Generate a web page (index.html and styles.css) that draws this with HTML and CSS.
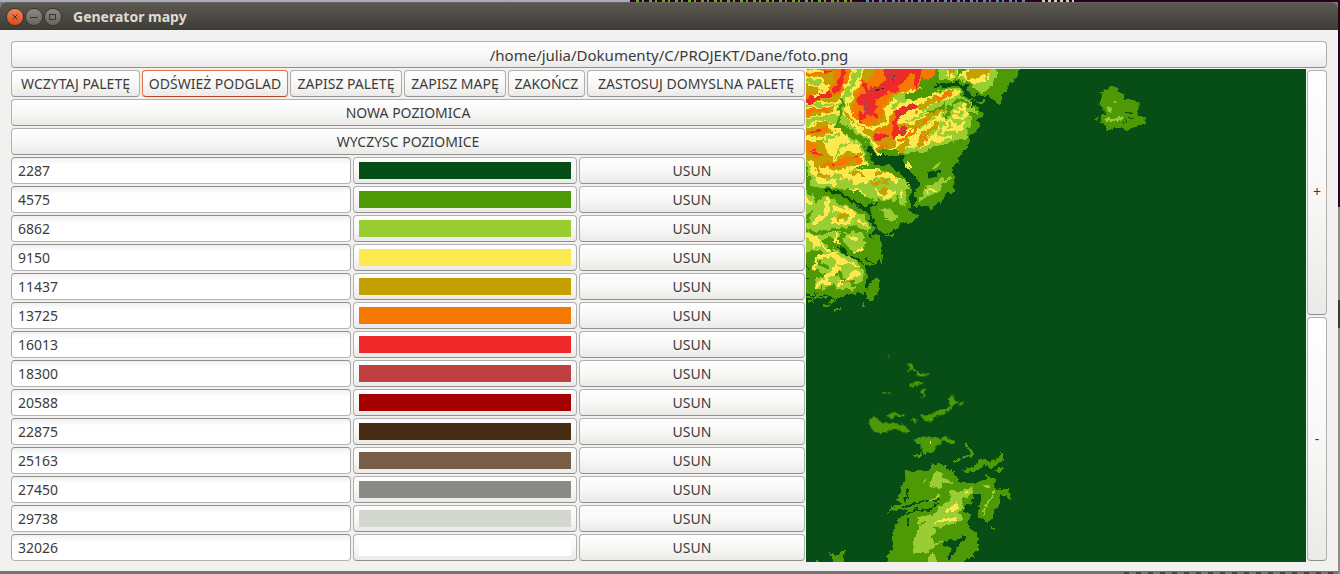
FILE: index.html
```html
<!DOCTYPE html>
<html lang="pl">
<head>
<meta charset="utf-8">
<title>Generator mapy</title>
<link rel="stylesheet" href="styles.css">
</head>
<body>
<div class="window">
  <header class="titlebar">
    <button class="wm close" aria-label="Zamknij"><svg viewBox="0 0 16 16"><path d="M5.500 5.500l5 5M10.500 5.500l-5 5"/></svg></button>
    <button class="wm" aria-label="Minimalizuj"><svg viewBox="0 0 16 16"><path d="M4 8.500h8"/></svg></button>
    <button class="wm" aria-label="Maksymalizuj"><svg viewBox="0 0 16 16"><path d="M4.500 5.500h6v5h-6z"/></svg></button>
    <h1>Generator mapy</h1>
  </header>
  <main class="content">
    <button class="btn path">/home/julia/Dokumenty/C/PROJEKT/Dane/foto.png</button>
    <div class="columns">
      <section class="editor">
        <div class="toolbar">
          <button class="btn">WCZYTAJ PALETĘ</button>
          <button class="btn focused">ODŚWIEŻ PODGLAD</button>
          <button class="btn">ZAPISZ PALETĘ</button>
          <button class="btn">ZAPISZ MAPĘ</button>
          <button class="btn">ZAKOŃCZ</button>
          <button class="btn">ZASTOSUJ DOMYSLNA PALETĘ</button>
        </div>
        <button class="btn">NOWA POZIOMICA</button>
        <button class="btn">WYCZYSC POZIOMICE</button>
        <div class="level"><input class="entry" aria-label="Poziom 1" value="2287"><button class="btn swatch" aria-label="Kolor 1"><span class="c1"></span></button><button class="btn">USUN</button></div>
        <div class="level"><input class="entry" aria-label="Poziom 2" value="4575"><button class="btn swatch" aria-label="Kolor 2"><span class="c2"></span></button><button class="btn">USUN</button></div>
        <div class="level"><input class="entry" aria-label="Poziom 3" value="6862"><button class="btn swatch" aria-label="Kolor 3"><span class="c3"></span></button><button class="btn">USUN</button></div>
        <div class="level"><input class="entry" aria-label="Poziom 4" value="9150"><button class="btn swatch" aria-label="Kolor 4"><span class="c4"></span></button><button class="btn">USUN</button></div>
        <div class="level"><input class="entry" aria-label="Poziom 5" value="11437"><button class="btn swatch" aria-label="Kolor 5"><span class="c5"></span></button><button class="btn">USUN</button></div>
        <div class="level"><input class="entry" aria-label="Poziom 6" value="13725"><button class="btn swatch" aria-label="Kolor 6"><span class="c6"></span></button><button class="btn">USUN</button></div>
        <div class="level"><input class="entry" aria-label="Poziom 7" value="16013"><button class="btn swatch" aria-label="Kolor 7"><span class="c7"></span></button><button class="btn">USUN</button></div>
        <div class="level"><input class="entry" aria-label="Poziom 8" value="18300"><button class="btn swatch" aria-label="Kolor 8"><span class="c8"></span></button><button class="btn">USUN</button></div>
        <div class="level"><input class="entry" aria-label="Poziom 9" value="20588"><button class="btn swatch" aria-label="Kolor 9"><span class="c9"></span></button><button class="btn">USUN</button></div>
        <div class="level"><input class="entry" aria-label="Poziom 10" value="22875"><button class="btn swatch" aria-label="Kolor 10"><span class="c10"></span></button><button class="btn">USUN</button></div>
        <div class="level"><input class="entry" aria-label="Poziom 11" value="25163"><button class="btn swatch" aria-label="Kolor 11"><span class="c11"></span></button><button class="btn">USUN</button></div>
        <div class="level"><input class="entry" aria-label="Poziom 12" value="27450"><button class="btn swatch" aria-label="Kolor 12"><span class="c12"></span></button><button class="btn">USUN</button></div>
        <div class="level"><input class="entry" aria-label="Poziom 13" value="29738"><button class="btn swatch" aria-label="Kolor 13"><span class="c13"></span></button><button class="btn">USUN</button></div>
        <div class="level"><input class="entry" aria-label="Poziom 14" value="32026"><button class="btn swatch" aria-label="Kolor 14"><span class="c14"></span></button><button class="btn">USUN</button></div>
      </section>
      <svg class="map" viewBox="0 0 500 493" preserveAspectRatio="xMinYMin slice" role="img" aria-label="Podgląd mapy">
        <defs>
          <filter id="rough" color-interpolation-filters="sRGB" x="-5%" y="-5%" width="110%" height="110%">
            <feTurbulence type="fractalNoise" baseFrequency="0.16" numOctaves="2" seed="4"/>
            <feDisplacementMap in="SourceGraphic" scale="9" xChannelSelector="R" yChannelSelector="G"/>
          </filter>
          <filter id="fine" color-interpolation-filters="sRGB" x="-5%" y="-5%" width="110%" height="110%">
            <feTurbulence type="fractalNoise" baseFrequency="0.25" numOctaves="2" seed="9"/>
            <feDisplacementMap in="SourceGraphic" scale="5" xChannelSelector="R" yChannelSelector="G"/>
          </filter>
        </defs>
        <!-- north-west mountains -->
        <g filter="url(#rough)">
          <g transform="translate(94 -3) scale(.3333)">
            <path class="f2" d="M-300-20H376L340 45 315 75 302 114 285 100 240 85 205 95 212 115 240 125 245 150 228 165 240 175 225 200 205 215 210 225 195 255 180 265 175 295 150 305 165 330 158 380H-300z"/>
          </g>
          <g transform="translate(0 101) scale(.3333)">
            <path class="f2" d="M-30-20L445-20 445 10 437 50 405 98 385 100 378 122 360 110 330 108 315 122 342 138 320 153 300 155 270 175 240 190 210 178 200 165 205 185 230 210 228 250 215 280 195 285 180 285 185 320 180 340 175 370 120 375 100 382 60 375-30 370z"/>
            <path class="f2" d="M175 370L180 387 205 387 222 360 220 325 195 335z"/>
            <path class="f3" d="M-20 45L100 36 140 55 190 88 268 92 282 60 270 20 265-20H-20z"/>
            <path class="f4" d="M8-20L20 35 90 42 150 68 180 78 200 55 225 86 262 86 266 25 220-20z"/>
            <path class="f5" d="M18 5L50 33 80 15 130 22 200 40 228 78 248 70 238 25 160 12 130-20H30z"/>
            <path class="f6" d="M35 10L50 22 60 5 120 12 110-10H50z"/>
            <path class="s3" stroke-width="9" d="M110 46L150 52 195 74M120 30L190 62"/>
            <path class="f3" d="M-20 55L10 55 20 70 28 100 45 82 75 85 110 105 160 130 192 165 185 185 150 165 120 175 170 190 180 215 160 250 130 245 105 205 60 200 90 240 150 270 170 300 175 330 140 360 90 362 80 335 50 360 20 350 40 310 20 290 45 250 20 240-20 250z"/>
            <path class="s2" stroke-width="11" d="M20 120L0 150M-10 175L30 190 90 180 160 180M55 215L110 235 170 260M10 260L60 290M30 320L90 310 150 345M70 205L75 235M105 195L115 230M0 310L30 300"/>
            <path class="s4" stroke-width="15" d="M65 95L60 130 25 160M85 115L140 130 130 155 80 155M0 90L12 100M8 200L35 210 22 230M45 260L75 250 105 272M62 320L95 295M98 342L125 328 152 312M32 348L62 334"/>
            <path class="s4" stroke-width="7" d="M160 150L182 170M90 190L95 215M125 200L150 205M150 245L165 240M25 215L70 240M105 272L150 285M35 262L20 300M90 265L100 310"/>
            <path class="s5" stroke-width="9" d="M98 145L120 130M130 330L110 340"/>
            <path class="s3" stroke-width="22" d="M290 35L290 100"/>
            <path class="s4" stroke-width="5" d="M290 55L287 85"/>
            <path class="f3" d="M340 90L355 55 412 28 398 65 360 82z"/>
            <path class="s4" stroke-width="8" d="M365 64L384 60"/>
            <path class="f3" d="M222 118L250 115 272 135 268 158 245 150z"/>
          </g>
          <g transform="translate(0 -3) scale(.3333)">
            <path class="f4" d="M-30-20H330V230L300 250 190 250 200 300 250 320 290 345-30 350z"/>
            <path class="f5" d="M-30-20H330V215L240 250 190 220 150 175 115 165 60 180-30 200z"/>
            <path class="f5" d="M-30 185L60 180 90 205 50 230 75 270 120 255 180 260 195 290 110 315 40 335 25 290-30 270z"/>
            <path class="f6" d="M165 40L190 45 210-20 340-20 330 68 280 75 250 95 228 130 230 155 200 180 160 185 135 150 148 90z"/>
            <path class="f6" d="M340 105L290 118 260 140 245 190 250 228 280 228 335 190z"/>
            <path class="f6" d="M85-20L130-20 128 50 100 85 60 95-20 115-20 85 60 70 80 45z"/>
            <path class="s6" stroke-width="14" d="M-10 28L70 14M10 202L62 190M-10 135L60 130M-10 245L40 268M58 300L105 292 135 276 185 285M50 335L75 322M205 190L240 195 232 215M215 250L235 235M30 245L-5 232"/>
            <path class="f7" d="M168 45L186 50 183 70 215 60 240 45 222-20H312L275 48 278 70 235 85 207 100 217 130 182 150 162 178 162 145 180 125 153 112 158 85 178 85z"/>
            <path class="f7" d="M335 112L300 128 265 145 262 175 255 205 265 222 292 215 310 190 335 145z"/>
            <path class="s7" stroke-width="15" d="M112-10L108 40 92 70M70 86L0 106M210 212L236 208M165 145L215 150"/>
            <path class="s7" stroke-width="6" d="M12 202L45 192M20 258L42 266M80 296L90 294M140 276L155 272M45 20L75 14"/>
            <path class="s8" stroke-width="12" d="M242 22L262 45 270 25M190 80L215 68 235 70M178 100L182 135M273 150L285 148M278 208L296 188"/>
            <path class="s9" stroke-width="4" d="M260 36L264 46M213 70L225 68M288 194L290 200"/>
            <path class="s4" stroke-width="34" d="M165 0L140 50 118 95 105 115 102 170"/>
            <path class="s4" stroke-width="52" d="M102 170L140 205 175 230 200 285 290 315"/>
            <path class="s4" stroke-width="28" d="M-10 46L35 45 55 68M-10 172L50 155 95 155M340 82L295 92 262 118 245 135"/>
            <path class="s4" stroke-width="18" d="M-10 122L40 118 95 112"/>
            <path class="s4" stroke-width="9" d="M245 130L243 180M-10 14L50 18M-10 218L60 215 90 200M15 90L60 78M140 75L125 130 150 170 200 190 240 172"/>
            <path class="s4" stroke-width="20" d="M92 205L58 222M145 225L110 235 88 272M185 300L150 305 90 325 50 315"/>
            <path class="s3" stroke-width="38" d="M103 165L140 205 175 230 200 285 290 315"/>
            <path class="s3" stroke-width="17" d="M163 0L140 50 118 95 105 115 102 170M-10 48L35 46M340 84L295 94 265 118M-10 172L50 156 95 160"/>
            <path class="s3" stroke-width="8" d="M-10 122L40 118 95 114M92 205L58 225 48 218M130 230L105 240 88 272M175 303L145 312 90 330"/>
            <path class="s2" stroke-width="24" d="M96 180L145 208 178 232 200 290 310 330"/>
            <path class="s2" stroke-width="9" d="M107 95L103 165M340 88L320 88M160 306L240 306"/>
            <path class="s3" stroke-width="34" d="M-10 290L5 345 100 352 300 352"/>
            <path class="s2" stroke-width="22" d="M-10 290L2 350 15 375"/>
            <path class="s4" stroke-width="14" d="M30 340L85 350M110 320L150 345 200 340M190 320L260 330 270 350"/>
            <path class="s5" stroke-width="8" d="M30 325L60 335M130 320L170 325M210 325L240 318M200 350L250 345"/>
          </g>
          <g transform="translate(94 -3) scale(.3333)">
            <path class="f3" d="M112-20H300L285 45 250 82 225 70 200 45 120 42z"/>
            <path class="f4" d="M135-20H285L270 35 250 55 230 50 225 62 195 35 140 32z"/>
            <path class="f5" d="M138-20H172L168 22 145 30zM195 22L240-10 280-10 270 24 205 36z"/>
            <path class="s3" stroke-width="9" d="M175 5L160 35M240 75L260 45 262 30M185 15L205 5"/>
            <path class="s2" stroke-width="6" d="M185 8L165 38"/>
            <path class="f6" d="M-10-20H110L100 35 70 40 50 75 30 70-10 75z"/>
            <path class="f7" d="M-10-20H75L62 45 45 70 40 15 15 40-10 65z"/>
            <path class="f3" d="M-10 80L60 80 120 65 175 65 200 95 215 118 235 130 228 140 200 142 215 165 200 200 205 212 150 230 60 258-10 262z"/>
            <path class="f4" d="M-10 112L50 100 100 82 150 70 175 80 165 96 110 110 60 130 60 150 90 135 130 118 140 125 125 150 150 170 135 195 110 215 80 240 40 245-10 255z"/>
            <path class="s4" stroke-width="12" d="M165 135L190 125 202 150M150 165L175 190 190 175M140 190L185 188M160 150L190 158M105 225L150 212"/>
            <path class="s5" stroke-width="16" d="M55 130L95 105 155 82M-5 178L40 185 90 150 130 130M60 232L75 200 115 175M0 250L25 228"/>
            <path class="s6" stroke-width="10" d="M0 145L45 115M0 222L15 215 55 190 80 160M110 95L150 84M70 215L80 225"/>
            <path class="s7" stroke-width="18" d="M-10 145L20 130 42 116M-10 200L15 190"/>
            <path class="s8" stroke-width="9" d="M-5 155L2 140M3 198L12 190M28 124L36 118"/>
            <path class="s4" stroke-width="10" d="M-5 168L40 162 80 135M50 200L85 175"/>
            <path class="s3" stroke-width="7" d="M20 165L50 158 90 130 140 112M60 185L100 160M80 215L110 190M115 205L130 170"/>
            <path class="s2" stroke-width="10" d="M140 150L155 115 180 100 205 120M90 135L135 120"/>
            <path class="s2" stroke-width="24" d="M30 92L80 82 120 58 175 55 205 88 245 98"/>
            <path class="s1" stroke-width="13" d="M110 61L165 52 190 62 208 88 240 98 285 106"/>
            <path class="s3" stroke-width="9" d="M97 306L115 298M120 350L150 335"/>
            <path class="s1" stroke-width="9" d="M85 326L120 319M218 208L225 206"/>
          </g>
          <path class="f1" d="M59 76L65 80 70 87 80 86 98 88 97 97 112 107 112 120 106 120 100 112 95 104 83 96 71 95 66 92z"/>
          <g transform="translate(0 101) scale(.3333)">
            <path class="s1" stroke-width="16" d="M285-5L308 15 322 45 320 110 310 118"/>
            <path class="s1" stroke-width="9" d="M60 62L100 68 150 100 180 115 200 145 206 185M182 112L215 98"/>
            <path class="s1" stroke-width="5" d="M100 230L130 258 160 270 175 285M180 265L195 278M2 285L6 305M0 330L10 328M200 190L195 205M190 110L195 98"/>
            <path class="s1" stroke-width="8" d="M370 12L405 8"/>
          </g>
        </g>
        <!-- coastal islets -->
        <g filter="url(#fine)">
          <g transform="translate(0 101) scale(.3333)">
            <path class="s2" stroke-width="6" d="M5 380L30 384 65 382M68 395L90 392M55 408L76 406M85 422L98 416M8 393L20 394M172 400L173 408M240 195L262 195M228 258L225 278"/>
          </g>
          <g transform="translate(274 7) scale(.3333)">
            <path class="f2" d="M62 50L78 38 95 30 118 38 116 50 130 55 130 72 150 68 175 78 178 95 172 118 198 125 192 145 160 155 140 165 130 158 100 155 85 165 76 150 60 140 64 118 80 112 55 85 65 65zM44 125L57 123 50 135z"/>
            <path class="s1" stroke-width="4" d="M132 110L155 112M142 125L158 126M132 140L140 132"/>
            <path class="s3" stroke-width="9" d="M82 132L126 128M86 94L87 104"/>
            <path class="s3" stroke-width="4" d="M103 79L106 83"/>
          </g>
          <g transform="translate(54 271) scale(.3333)">
            <path class="f2" d="M141 70L152 72 158 84 172 92 176 98 208 104 205 109 172 108 172 99 155 90 142 94 150 84zM142 135L188 123 190 130 152 142zM188 146L200 147 190 158 195 172 187 172 181 156zM82 230L95 217 133 224 134 230 105 230 90 236zM28 240L38 228 52 232 54 244 72 248 100 250 125 252 138 262 148 275 142 280 118 272 105 268 82 272 72 280 52 278 30 264zM180 228L215 222 235 210 262 206 268 198 266 175 277 162 284 180 298 188 285 192 270 212 245 224 235 226 210 244 195 248 193 235zM160 300L180 292 210 290 245 295 258 285 266 297 283 300 275 305 250 304 232 318 215 340 185 340 182 312z"/>
            <path class="s2" stroke-width="4" d="M84 50L86 48M70 158L78 158M85 158L92 162M150 240L172 240M162 236L164 248M298 194L310 190M318 320L324 318M326 328L332 328"/>
          </g>
        </g>
        <!-- southern island -->
        <g filter="url(#fine)">
          <g transform="translate(-6 371) scale(.3333)">
            <path class="f2" d="M345 0H425L405 15 390 38 372 42 365 22z"/>
            <path class="s2" stroke-width="8" d="M345 48L362 45M430-2L460 5M500 15L508 28 520 45 490 50M465 64L475 62M490 90L510 92 530 85M505 48L522 42M592 92L608 86M575 262L577 266"/>
            <path class="s2" stroke-width="14" d="M500 92L525 86 550 62 570 76 603 56 606 46"/>
            <path class="f2" d="M316 94L350 95 365 92 385 90 400 72 436 72 438 85 462 95 480 125 530 128 555 120 560 108 590 115 580 130 585 145 625 148 635 180 615 165 600 165 595 200 585 212 572 240 560 250 550 235 535 232 535 210 545 165 520 165 515 190 495 195 490 215 515 225 500 245 512 270 530 275 537 325 520 340 525 355 500 355 480 385H265L262 345 278 330 275 290 295 232 318 226 320 210 300 208 265 215 275 202 310 190 290 182 305 150 300 140 315 120z"/>
            <path class="f2" d="M88 337L108 350 120 337 134 333 130 390H100L98 352zM45 370L52 355 60 372z"/>
            <path class="s1" stroke-width="6" d="M322 148L320 175 312 185M310 205L345 190 385 182 415 178M325 222L350 208 385 212 410 190M325 235L325 255M540 165L535 200"/>
            <path class="f1" d="M428 315L445 298 468 300 500 285 498 300 480 310 465 335 445 362 442 350 458 325 440 318z"/>
            <path class="f3" d="M400 100L412 94 425 98 428 112 455 125 462 132 430 128 425 145 395 142 388 128z"/>
            <path class="f3" d="M445 155L478 152 515 142 520 155 500 172 485 175 490 200 478 215 490 240 465 250 430 258 410 270 395 290 405 320 380 340 340 338 340 305 355 265 352 230 400 225 420 200 455 180z"/>
            <path class="f3" d="M385 350L405 335 410 365 400 380 385 380z"/>
            <path class="s3" stroke-width="5" d="M388 184L418 164M548 225L560 190 575 175 582 152M368 128L375 122M548 138L568 138M400 318L425 305"/>
            <path class="s2" stroke-width="5" d="M355 258L375 245M400 262L420 265"/>
            <path class="s4" stroke-width="9" d="M440 212L472 203M440 212L460 200 470 195M425 244L445 238 465 238"/>
            <path class="s4" stroke-width="5" d="M400 248L430 245M494 158L506 156"/>
            <path class="s4" stroke-width="4" d="M391 8L391 12"/>
          </g>
        </g>
      </svg>
      <div class="zoom">
        <button class="btn">+</button>
        <button class="btn">-</button>
      </div>
    </div>
  </main>
</div>
</body>
</html>
```
FILE: styles.css
```css
* { box-sizing: border-box; }

/* desktop and terminal edges visible around the window */
body {
  margin: 0;
  min-height: 100vh;
  padding: 2px 2px 3px 0;
  display: flex;
  background:
    repeating-linear-gradient(90deg, #5fae1c 0 3px, #2c001e 3px 6px, #5fae1c 6px 8px, #2c001e 8px 13px) 636px 0 / 221px 2px no-repeat,
    repeating-linear-gradient(90deg, #5a86b8 0 3px, #2c001e 3px 6px, #5a86b8 6px 8px, #2c001e 8px 13px) 866px 0 / 160px 2px no-repeat,
    repeating-linear-gradient(90deg, #d0ccc8 0 3px, #2c001e 3px 6px) 1042px 0 / 32px 2px no-repeat,
    linear-gradient(#2c001e, #2c001e) 630px 0 / 100% 2px no-repeat,
    linear-gradient(#2c001e 0 207px, #8c8c8c 207px 300px, #3a3a3a 300px 328px, #8c8c8c 328px) right top / 2px 100% no-repeat,
    linear-gradient(#a7acbc, #a7acbc) left top / 100% 2px no-repeat,
    repeating-linear-gradient(90deg, #4a4440 0 5px, #767472 5px 12px) 1124px 100% / 212px 2px no-repeat,
    #767472;
  font: 14px/20px "Noto Sans", "Open Sans", sans-serif;
  color: #3c3c3c;
}

.window {
  flex: 1;
  display: flex;
  flex-direction: column;
  background: #f2f1f0;
  border-radius: 6px 6px 0 0;
  overflow: hidden;
}

.titlebar {
  height: 28px;
  display: flex;
  align-items: center;
  gap: 3px;
  padding-left: 7px;
  background: linear-gradient(#5b5850, #3d3c37);
  border-top: 1px solid #64625a;
}

.titlebar h1 {
  margin: 0 0 0 9px;
  font: bold 14px/20px "Noto Sans", sans-serif;
  color: #dfdbd2;
}

.wm {
  width: 16px;
  height: 16px;
  padding: 0;
  border: 0;
  border-radius: 50%;
  background: linear-gradient(#8b8981, #67655e);
  box-shadow: 0 0 0 1px #35342f;
}

.wm.close { background: linear-gradient(#f58359, #e0491b); }
.wm svg { display: block; width: 16px; height: 16px; fill: none; stroke: #35342f; stroke-width: 1; }

.content {
  flex: 1;
  display: flex;
  flex-direction: column;
  gap: 1px;
  padding: 11px 11px 9px;
}

.btn, .entry {
  display: block;
  min-width: 0;
  height: 27px;
  padding: 0;
  border: 1px solid #b1b0ae;
  border-bottom-color: #929190;
  border-radius: 4px;
  font: inherit;
  color: inherit;
}

.btn {
  background: linear-gradient(#fefefe, #f8f8f7 50%, #ebeae8);
  text-align: center;
  white-space: nowrap;
}

.btn.path { font-size: 15px; }

.btn.focused { border-color: #e2764e; border-bottom-color: #b84a23; box-shadow: 0 0 1px #e9855f; }

.entry {
  width: 100%;
  padding: 0 6px;
  border-color: #8f8e8d #a9a8a6 #b5b4b2;
  background: linear-gradient(#f1f1f1, #fff 7px);
}

.columns { flex: 1; display: flex; }

.editor {
  flex: 1;
  min-width: 0;
  display: flex;
  flex-direction: column;
  gap: 2px;
  padding: 1px 1px 1px 0;
}

.toolbar {
  display: grid;
  grid-template-columns: 129fr 146fr 112fr 102fr 77fr 218fr;
  gap: 2px;
}

.level {
  display: grid;
  grid-template-columns: 340fr 224fr 226fr;
  gap: 2px;
}

.swatch { padding: 4px 5px; }
.swatch span { display: block; height: 17px; }

.c1 { background: #064d16; }
.c2 { background: #4e9a06; }
.c3 { background: #9acd32; }
.c4 { background: #fce94f; }
.c5 { background: #c4a000; }
.c6 { background: #f57900; }
.c7 { background: #ef2929; }
.c8 { background: #bf4040; }
.c9 { background: #a40000; }
.c10 { background: #482c13; }
.c11 { background: #785d47; }
.c12 { background: #888a85; }
.c13 { background: #d3d7cf; }
.c14 { background: #fff; }

.map {
  flex: 0 0 500px;
  width: 500px;
  align-self: stretch;
  background: #064d16;
  overflow: hidden;
  shape-rendering: crispEdges;
}

.map path { fill: none; stroke-linejoin: round; stroke-linecap: round; }
.map .f1 { fill: #064d16; }
.map .f2 { fill: #4e9a06; }
.map .f3 { fill: #9acd32; }
.map .f4 { fill: #fce94f; }
.map .f5 { fill: #c4a000; }
.map .f6 { fill: #f57900; }
.map .f7 { fill: #ef2929; }
.map .s1 { stroke: #064d16; }
.map .s2 { stroke: #4e9a06; }
.map .s3 { stroke: #9acd32; }
.map .s4 { stroke: #fce94f; }
.map .s5 { stroke: #c4a000; }
.map .s6 { stroke: #f57900; }
.map .s7 { stroke: #ef2929; }
.map .s8 { stroke: #bf4040; }
.map .s9 { stroke: #a40000; }

.zoom {
  flex: 0 0 21px;
  display: flex;
  flex-direction: column;
  gap: 2px;
  padding: 1px 0 1px 1px;
}

.zoom .btn {
  flex: 1;
  height: auto;
}
```
